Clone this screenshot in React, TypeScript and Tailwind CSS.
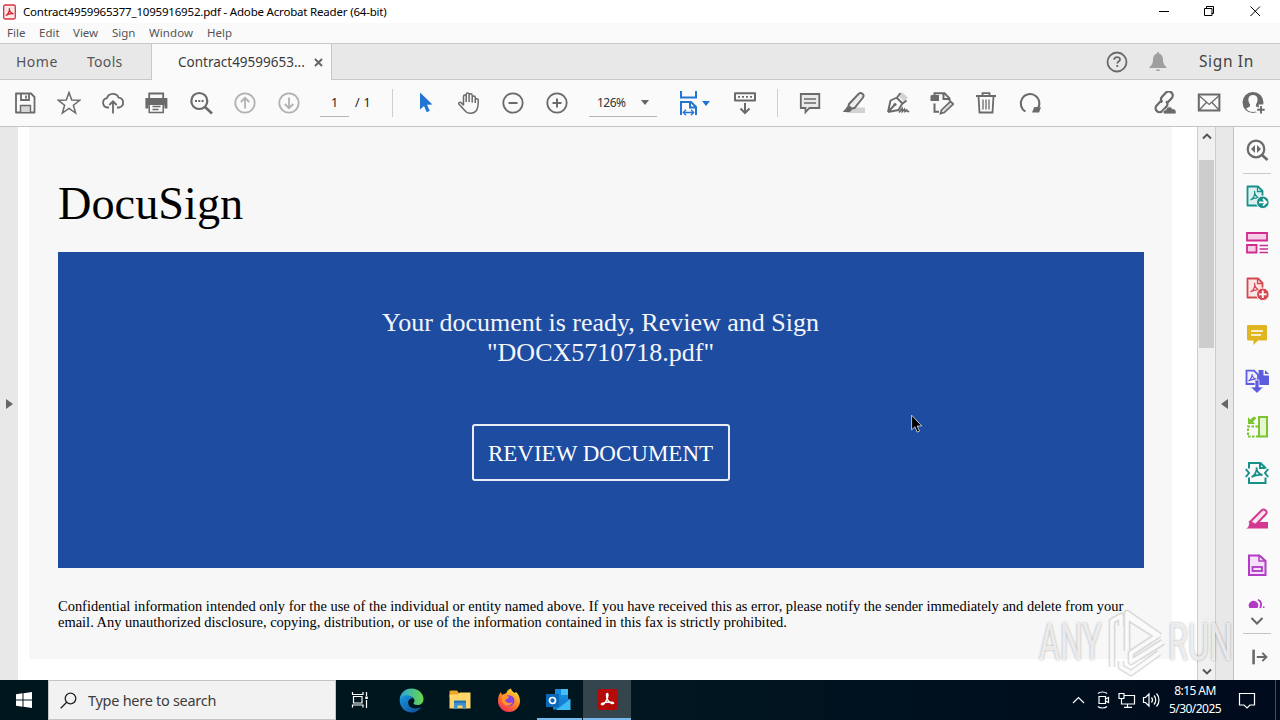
import React from "react";

type IconProps = { children: React.ReactNode; className?: string; size?: number };

function Icon({ children, className = "text-[#6a6a6a]", size = 24 }: IconProps) {
  return (
    <svg
      className={`shrink-0 ${className}`}
      width={size}
      height={size}
      viewBox="0 0 24 24"
      fill="none"
      stroke="currentColor"
      strokeWidth={1.8}
    >
      {children}
    </svg>
  );
}

function Cell({ children }: { children: React.ReactNode }) {
  return <div className="flex w-11 shrink-0 items-center justify-center">{children}</div>;
}

function TitleBar() {
  return (
    <div className="flex h-[23px] shrink-0 items-center bg-white pl-[3px]">
      <svg width="13" height="16" viewBox="0 0 13 16">
        <rect x="0.7" y="1" width="11.6" height="14" rx="1.5" fill="#fbe9e9" stroke="#d3343f" strokeWidth="1.3" />
        <path d="M2.800 11.500c2-.8 4.300-4.500 3.500-7.300 0 2.500 1.700 5 4.200 5.600-2.500-.6-5.500.2-7.700 1.700z" fill="none" stroke="#d3232f" strokeWidth="1.200" />
      </svg>
      <span className="ml-[7px] whitespace-nowrap text-[11.500px] tracking-[-0.190px] text-black">
        Contract4959965377_1095916952.pdf - Adobe Acrobat Reader (64-bit)
      </span>
      <svg className="ml-auto" width="140" height="22" viewBox="1140 0 140 22" fill="none" stroke="#000" strokeWidth="1">
        <path d="M1159 10.500h10M1206.500 8v-2.500h7v7h-2M1204.500 7.500h7.500v7h-7.500zM1250.500 5.500l9.500 9.500M1260 5.500l-9.500 9.500" />
      </svg>
    </div>
  );
}

function MenuBar() {
  return (
    <div className="flex h-5 shrink-0 items-center bg-[#fafafa] pl-[7px] text-[11.500px] text-[#555]">
      <span className="w-8">File</span>
      <span className="w-[34px]">Edit</span>
      <span className="w-[39px]">View</span>
      <span className="w-[37px]">Sign</span>
      <span className="w-[58px] tracking-[0.100px]">Window</span>
      <span>Help</span>
    </div>
  );
}

function TabBar() {
  return (
    <div className="flex h-[37px] shrink-0 border-y border-[#c8c8c8] bg-[#e8e8e8] text-[14px] text-[#555]">
      <div className="flex w-[72px] items-center pl-4 tracking-[0.500px]">Home</div>
      <div className="flex w-[79px] items-center pl-[15px] tracking-[0.300px]">Tools</div>
      <div className="-mb-px flex w-[181px] items-center border-x border-[#c8c8c8] bg-[#fafafa] pl-[26px] text-[13.500px] text-[#3c3c3c]">
        <span className="w-[136px]">Contract49599653...</span>
        <svg width="9" height="9" viewBox="0 0 9 9" stroke="#666" strokeWidth="2">
          <path d="M1 1l7 7M8 1L1 8" />
        </svg>
      </div>
      <div className="ml-auto flex items-center pr-[26px]">
        <Icon className="text-[#6a6a6a]">
          <circle cx="12" cy="12" r="9.500" />
          <path d="M9.200 9.800c0-3.600 5.800-3.300 5.800-.3 0 2-2.700 2-2.700 4M12.300 15v2" />
        </Icon>
        <Icon className="ml-[17px] text-[#9f9f9f]">
          <path d="M12 2c.9 0 1 .8 1 1.500 2.600.8 3.800 2.800 4 6 .2 4 1 5.500 3.500 7.500v1h-17v-1c2.500-2 3.300-3.500 3.500-7.500.2-3.200 1.400-5.200 4-6 0-.7.100-1.500 1-1.500zM9.800 19.500h4.400c-.4 2-4 2-4.400 0z" fill="currentColor" stroke="none" />
        </Icon>
        <span className="ml-[29px] text-[15.500px] tracking-[0.650px] text-[#444]">Sign In</span>
      </div>
    </div>
  );
}

function Toolbar() {
  return (
    <div className="flex h-[47px] shrink-0 items-center border-b border-[#c4c4c4] bg-[#fafafa] pl-[3px]">
      <Cell>
        <Icon>
          <path d="M3 2.500h15l3.500 3.500v15.500H3z" strokeLinejoin="round" />
          <path d="M8 3v6h8V3" />
          <path d="M13 4.500v3" />
          <path d="M7.500 21v-6.500h10V21" fill="#d5d5d5" strokeWidth="1.400" />
        </Icon>
      </Cell>
      <Cell>
        <Icon>
          <path d="M12 1.500l2.700 7.600 8 .2-6.300 4.900 2.200 7.800-6.600-4.600L5.400 22l2.200-7.800-6.300-4.900 8-.2z" strokeWidth="1.500" />
        </Icon>
      </Cell>
      <Cell>
        <Icon>
          <path d="M8 16.500H6.500a4.700 4.700 0 01-.6-9.300 6.300 6.300 0 0111.700-.6A5 5 0 0118 16.500h-2" />
          <path d="M12 22.500V10.500M8.300 14L12 10.300 15.700 14" />
        </Icon>
      </Cell>
      <Cell>
        <Icon>
          <path d="M4.200 7V2.500h14V7" />
          <path d="M.4 7h22v10.500h-3V14h-16v3.500h-3z" fill="currentColor" stroke="none" />
          <path d="M4.200 13.500v8h14v-8M7.500 15.500h8M7.500 18.500h6" strokeWidth="1.500" />
        </Icon>
      </Cell>
      <Cell>
        <Icon>
          <circle cx="10.300" cy="10" r="8" strokeWidth="2.200" />
          <path d="M16 16l7 6.500" strokeWidth="2.600" />
          <path d="M6 10h2M9.300 10h2M12.600 10h2" strokeWidth="2" />
        </Icon>
      </Cell>
      <Cell>
        <Icon className="text-[#b1b1b1]">
          <circle cx="12" cy="12" r="9.700" />
          <path d="M12 17.500V7M7.800 11L12 6.800 16.200 11" />
        </Icon>
      </Cell>
      <Cell>
        <Icon className="text-[#b1b1b1]">
          <circle cx="12" cy="12" r="9.700" />
          <path d="M12 6.500V17M7.800 13l4.200 4.200 4.200-4.200" />
        </Icon>
      </Cell>
      <div className="ml-[9px] h-[28px] w-[29px] border-b border-[#b5b5b5] pt-[6px] text-center text-[12.500px] leading-4 text-[#222]">1</div>
      <span className="ml-[6px] w-[17px] whitespace-nowrap text-[12.500px] tracking-[0.300px] text-[#222]">/ 1</span>
      <div className="ml-[20px] h-7 w-px bg-[#cfcfcf]" />
      <div className="ml-[10px] flex">
        <Cell>
          <Icon className="text-[#2275d0]">
            <path d="M7 1.500l12.500 12-5.500.300 2.700 6-3 1.400-2.700-6.200-4 3.500z" fill="currentColor" stroke="none" />
          </Icon>
        </Cell>
        <Cell>
          <Icon>
            <path d="M6.500 14.500V5.300c0-1.900 2.700-1.900 2.700 0V11M9.200 6V3.500c0-2 2.900-2 2.900 0V11M12.100 4.500c0-2.300 3.100-2.300 3.100 0V11.500M15.200 6.500c0-2 3.100-2 3.100 0V12M18.300 9c.3-1.900 3.200-1.500 3 .4 0 5.600-.3 8-2.300 10.600-2 2.600-7.500 3-10 .8C6 18 4.500 15.500 2 13.300 1 12 2.800 10.700 4.200 11.700l2.300 2.600" strokeWidth="1.500" strokeLinejoin="round" />
          </Icon>
        </Cell>
        <Cell>
          <Icon>
            <circle cx="12" cy="12" r="9.700" />
            <path d="M7.500 12h9" strokeWidth="2" />
          </Icon>
        </Cell>
        <Cell>
          <Icon>
            <circle cx="12" cy="12" r="9.700" />
            <path d="M7.500 12h9M12 7.500v9" strokeWidth="2" />
          </Icon>
        </Cell>
      </div>
      <div className="ml-[10px] flex h-[27px] w-[68px] items-center border-b border-[#b5b5b5] pl-2">
        <span className="w-[44px] text-[12px] tracking-[-0.500px] text-[#333]">126%</span>
        <svg width="8" height="5" viewBox="0 0 8 5"><path d="M0 0h8L4 5z" fill="#666" /></svg>
      </div>
      <div className="ml-[19px] flex w-[37px] items-center">
        <svg width="26" height="26" viewBox="0 0 26 26" fill="none" stroke="#2275d0" strokeWidth="2">
          <path d="M5 1v6.500h15V1" />
          <path d="M5 25V12h10l5 5v8M14 12v5.500h6" />
          <path d="M8 22.500h9M10 19.800l-2.700 2.700 2.700 2.700M15 19.800l2.700 2.700-2.700 2.700" strokeWidth="1.300" />
        </svg>
        <svg width="8" height="5" viewBox="0 0 8 5"><path d="M0 0h8L4 5z" fill="#2275d0" /></svg>
      </div>
      <div className="ml-[20px]">
        <Icon>
          <path d="M2 2.200h20v7.300H2z" strokeWidth="2" strokeLinejoin="round" />
          <path d="M5 5.800h14" strokeDasharray="2 2" strokeWidth="1.800" />
          <path d="M12 12v10M7.500 17.500L12 22l4.500-4.500" strokeWidth="2" />
        </Icon>
      </div>
      <div className="ml-[20px] h-7 w-px bg-[#cfcfcf]" />
      <div className="ml-[10px] flex">
        <Cell>
          <Icon>
            <path d="M2.800 3h18.500v14H11.500l-4 4.300V17H2.800z" fill="#e9e9e9" />
            <path d="M6 8h12M6 12h12" strokeWidth="1.500" />
          </Icon>
        </Cell>
        <Cell>
          <Icon>
            <path d="M8 16.500h15V22H4z" fill="#d2d2d2" stroke="none" />
            <path d="M7 13L16.500 3c2.500-2.300 6.500.3 4.500 3.500L12.500 17l-3 .5L6.500 15z" fill="#ececec" strokeWidth="1.900" />
            <path d="M6 14.500l4.500 3.500L8 21H.8l2.500-3z" fill="currentColor" stroke="none" />
          </Icon>
        </Cell>
        <Cell>
          <Icon>
            <path d="M12.500 5L16 1.200l6 5.300-4 4z" fill="#d2d2d2" stroke="none" />
            <path d="M2 21l2.500-11.500L11 6.500l3.500-4.500M2 21l10.500-2 3.500-6 4.500-3.500M10.500 6.500l6.500 6.500M2 21l6.500-7" strokeWidth="1.900" strokeLinejoin="round" />
            <circle cx="9" cy="13.500" r="1.600" fill="currentColor" stroke="none" />
            <path d="M13 21.500l3-4 .3 3 2.200-2.300.5 2.300 1.700-1.500.8 1.500h1.800" strokeWidth="1.700" />
          </Icon>
        </Cell>
        <Cell>
          <Icon>
            <path d="M.5 5.500c0-1 .5-1.500 1.500-1.500h7v6H.5z" fill="currentColor" stroke="none" />
            <path d="M4.500 4V2.300h10l5 5V10M13.500 3v5h5M4.500 12.500v8.300H9" strokeWidth="2" />
            <path d="M11.500 19l9-8.500 2.800 2.500-9 8.500-3.800 1z" strokeWidth="1.700" fill="#ddd" />
          </Icon>
        </Cell>
        <Cell>
          <Icon>
            <path d="M2 5h20M8.500 5V2.200h7V5M4.500 5l1 16.500h13l1-16.500" />
            <path d="M9 8.500v10M12 8.500v10M15 8.500v10" strokeWidth="1.300" />
          </Icon>
        </Cell>
        <Cell>
          <Icon>
            <path d="M7.500 20.500A9.300 9.300 0 1119.500 18" strokeWidth="2" />
            <path d="M14 21.500l2.300-5.500 7 .5-1 1.500-1.200 3.500z" fill="currentColor" stroke="none" />
          </Icon>
        </Cell>
      </div>
      <div className="ml-auto flex pr-[4px]">
        <div className="flex w-[45px] justify-center">
          <Icon className="mr-[3px] text-[#6a6a6a]">
            <g transform="rotate(-47 12 11)" strokeWidth="2.300">
              <path d="M12 8H4.500a4 4 0 000 8H10a4 4 0 004-4" />
              <path d="M13 14h7a4 4 0 000-8h-5.500a4 4 0 00-4 4" />
            </g>
            <path d="M12.500 23c-2.500-1-1.500-4.500 1.500-4.200.5-3.500 5-4 6.300-1 3.500-.5 5 3.700 3 5.200z" fill="currentColor" stroke="#fafafa" strokeWidth="0.800" />
          </Icon>
        </div>
        <div className="flex w-[44px] justify-center">
          <Icon className="mr-[2px] text-[#6a6a6a]">
            <path d="M1.800 3.500h20.600v16H1.800z" strokeWidth="2" />
            <path d="M2 4.500l10.200 9L22.300 4.500M2.300 19l7-7.500M22 19l-7-7.500" strokeWidth="1.300" />
          </Icon>
        </div>
        <div className="flex w-[44px] justify-center">
          <Icon className="mr-[2px] text-[#6a6a6a]">
            <circle cx="12" cy="11.500" r="10.500" fill="currentColor" stroke="none" />
            <path d="M12 4c5.500 0 5.500 6 3 9.500-.5 2 .5 2.500 4 4L16.500 20c-3 1.300-6 1.300-9 0L5 17.500c3.500-1.500 4.500-2 4-4C6.500 10 6.500 4 12 4z" fill="#fafafa" stroke="none" />
            <path d="M20 13.500v10M15 18.700h9" stroke="#fafafa" strokeWidth="4.500" />
            <path d="M20 15v7.500M16.200 18.700h7.500" strokeWidth="1.900" />
          </Icon>
        </div>
      </div>
    </div>
  );
}

function PdfPage() {
  return (
    <div className="min-w-0 flex-1 bg-white pl-[11px] font-['Liberation_Serif',serif]">
      <div className="h-[532px] w-[1143px] bg-[#f7f7f7] px-[29px] pt-[50px] text-black">
        <h1 className="h-[75px] whitespace-nowrap text-[46.300px] leading-[53px]">DocuSign</h1>
        <section className="flex h-[316px] w-[1086px] flex-col items-center bg-[#1e4ca1] pt-[56px] text-white">
          <p className="-ml-px whitespace-nowrap text-center text-[26px] leading-[30px] text-[#f3f5fa]">
            Your document is ready, Review and Sign
            <br />
            &quot;DOCX5710718.pdf&quot;
          </p>
          <div className="mt-[56px] flex h-[57px] w-[258px] items-center justify-center whitespace-nowrap rounded-[3px] border-2 border-[#e9edf5] pr-px pt-[3px] text-[23px]">
            REVIEW DOCUMENT
          </div>
        </section>
        <p className="mt-[30px] whitespace-nowrap text-[14.480px] leading-4">
          Confidential information intended only for the use of the individual or entity named above. If you have received this as error, please notify the sender immediately and delete from your
          <br />
          email. Any unauthorized disclosure, copying, distribution, or use of the information contained in this fax is strictly prohibited.
        </p>
      </div>
    </div>
  );
}

function Scrollbar() {
  return (
    <div className="flex w-[19px] shrink-0 flex-col items-center border-x border-[#cdcdcd] bg-[#f0f0f0]">
      <div className="flex h-[33px] items-start pt-[6px]">
        <svg width="10" height="7" viewBox="0 0 10 7" fill="none" stroke="#505050" strokeWidth="1.800"><path d="M1 5.500l4-4 4 4" /></svg>
      </div>
      <div className="h-[188px] w-[15px] bg-[#cdcdcd]" />
      <svg className="mb-[5px] mt-auto" width="10" height="7" viewBox="0 0 10 7" fill="none" stroke="#505050" strokeWidth="1.800"><path d="M1 1.500l4 4 4-4" /></svg>
    </div>
  );
}

const acrobat = "M5.500 15c2.500-1 5-5.500 4-9 0 3.500 2 6 5 7-3.500-.7-6 0-9 2z";

function SidePanel() {
  return (
    <div className="flex w-[47px] shrink-0 flex-col items-center border-l border-[#c4c4c4] bg-[#fafafa]">
      <div className="flex h-[47px] w-7 items-center justify-center border-b border-[#c9c9c9]">
        <Icon>
          <circle cx="11" cy="11" r="8.300" strokeWidth="2.200" />
          <path d="M17 17l5.500 5" strokeWidth="2.600" />
          <path d="M10 7v8l-4-4zM12 7v8l4-4z" fill="currentColor" stroke="none" />
        </Icon>
      </div>
      <div className="flex h-[46px] items-center">
        <Icon className="text-[#179089]">
          <path d="M2.500 1.500h10.500l4.500 4.500v14.500h-15z" fill="#dff1ef" strokeLinejoin="round" />
          <path d="M12.500 1.500v5h5" strokeWidth="1.300" />
          <path d={acrobat} strokeWidth="1.200" />
          <circle cx="17.800" cy="17.300" r="6.300" fill="currentColor" stroke="#fafafa" strokeWidth="1" />
          <path d="M14 17.300h7M18 14l3.300 3.300-3.300 3.300" stroke="#fff" strokeWidth="1.800" />
        </Icon>
      </div>
      <div className="flex h-[46px] items-center">
        <Icon className="text-[#cf2c92]">
          <path d="M2 2h20v7.500H2zM2 14h9.500v7.500H2z" fill="#f7cee6" />
          <path d="M14.500 14.500H23M14.500 18H23M14.500 21.500H23" strokeWidth="1.300" />
        </Icon>
      </div>
      <div className="flex h-[46px] items-center">
        <Icon className="text-[#d7474f]">
          <path d="M2.500 1.500h10.500l4.500 4.500v14.500h-15z" fill="#fbe6e6" strokeLinejoin="round" />
          <path d="M12.500 1.500v5h5" strokeWidth="1.300" />
          <path d={acrobat} strokeWidth="1.200" />
          <circle cx="17.800" cy="17.300" r="6.300" fill="currentColor" stroke="#fafafa" strokeWidth="1" />
          <path d="M14 17.300h7.600M17.800 13.500v7.600" stroke="#fff" strokeWidth="1.800" />
        </Icon>
      </div>
      <div className="flex h-[46px] items-center">
        <Icon className="text-[#dfb520]">
          <path d="M3.500 2h17c1 0 1.500.5 1.500 1.500V16c0 1-.5 1.500-1.500 1.500H13L8.500 22v-4.500h-5C2.500 17.500 2 17 2 16V3.500C2 2.500 2.500 2 3.500 2z" fill="currentColor" stroke="none" />
          <path d="M6 8h12M6 12h10" stroke="#fff" strokeWidth="1.700" />
        </Icon>
      </div>
      <div className="flex h-[46px] items-center">
        <Icon className="text-[#5c5ce0]">
          <path d="M13.500 1h5v5.500H24V16h-10z" fill="currentColor" stroke="none" />
          <path d="M20 1l4 4h-4z" fill="currentColor" stroke="none" />
          <path d="M1.500 1.700h7.500l4 4V15h-11.500z" fill="#eeeefe" />
          <path d="M3.500 12c2-1 4-4.500 3.500-7 0 2.500 2 4.800 4.300 5.200-3-.2-5.600.3-7.800 1.800z" strokeWidth="1.200" />
          <path d="M10 11h4v7h4.500L12 24.300l-6.500-6.300H10z" fill="currentColor" stroke="#fafafa" strokeWidth="0.700" />
        </Icon>
      </div>
      <div className="flex h-[46px] items-center">
        <Icon className="text-[#7bc42f]">
          <path d="M14 2h8v19.500h-8z" fill="#e4f6d2" strokeWidth="2" />
          <path d="M13 11.500H3v10h10" strokeDasharray="2.500 1.500" strokeWidth="2" />
          <path d="M3 2v7h7l-2-2.300L11.500 3 9 1.500 5.200 4.500z" fill="currentColor" stroke="none" />
        </Icon>
      </div>
      <div className="flex h-[46px] items-center">
        <Icon className="text-[#179089]">
          <path d="M4 7.500V2h11.500l5 5v.5M4 16.500V22h16.500v-5.500M15 2.500V7h5" strokeWidth="2" />
          <path d="M.8 8L4 12 .8 16M23.200 8L20 12l3.200 4" strokeWidth="2" />
          <path d="M6.500 16c2.500-1 6-5.500 5-9.500 0 3.500 2.500 7 6 7.500-3.500-.5-7 0-11 2z" />
        </Icon>
      </div>
      <div className="flex h-[46px] items-center">
        <Icon className="text-[#d3398f]">
          <path d="M12 15h11v6.500H1z" fill="currentColor" stroke="none" />
          <path d="M5 15L16.500 3.500c2.500-2.300 6.500.5 4.500 3.500L10.500 18z" fill="#fbe3f1" strokeWidth="2" />
          <path d="M5 14l6 4.500-8 2.500z" fill="currentColor" stroke="none" />
        </Icon>
      </div>
      <div className="flex h-[46px] items-center">
        <Icon className="text-[#b23ac4]">
          <path d="M4 2.500h10.500l6 5.500v14H4z" fill="#f5e0fa" strokeWidth="2" />
          <path d="M14 2.500V8h6" strokeWidth="1.500" />
          <rect x="7.500" y="14" width="9.500" height="4" />
        </Icon>
      </div>
      <div className="mt-[11px] flex h-[10px] items-start">
        <svg width="20" height="10" viewBox="0 0 20 10">
          <path d="M2.500 9a4.700 4.700 0 118 0z" fill="#b23ac4" />
          <path d="M11 .8c3.300 1 4 5.500 2 8.200" fill="none" stroke="#b23ac4" strokeWidth="1.800" />
          <path d="M16 7.500h1.500V9h-1.500z" fill="#b23ac4" />
        </svg>
      </div>
      <div className="flex h-[25px] w-7 items-center justify-center border-b border-[#c4c4c4]">
        <svg width="14" height="10" viewBox="0 0 14 10" fill="none" stroke="#666" strokeWidth="2"><path d="M1.500 2L7 7.500 12.500 2" /></svg>
      </div>
      <div className="ml-[5px] flex h-[46px] items-center">
        <Icon size={22}>
          <path d="M5 4v16" strokeWidth="2.800" />
          <path d="M8.500 12h10M14.500 7.500l4.500 4.500-4.500 4.500" strokeWidth="2.200" />
        </Icon>
      </div>
    </div>
  );
}

function Watermark() {
  return (
    <div className="pointer-events-none absolute left-[1039px] top-[605px] h-[72px] w-[198px] font-[Roboto,sans-serif] text-white/75 [text-shadow:0_0_3px_rgba(0,0,0,0.35)]">
      <span className="absolute left-0 top-[12px] origin-left scale-x-[0.630] text-[51px] leading-[52px]">ANY</span>
      <svg className="absolute left-[68px] top-0" width="60" height="72" viewBox="0 0 60 72" fill="none">
        <g stroke="#999" strokeOpacity="0.300" strokeWidth="7" strokeLinejoin="round">
          <path d="M5 62V16l9-5v10M20 46V8l33 23M56 37L24 57V48l26-17-30-19M14 56v6l10 6 28-20" />
        </g>
        <g stroke="#fff" strokeOpacity="0.850" strokeWidth="3.500" strokeLinejoin="round">
          <path d="M5 62V16l9-5v10M20 46V8l33 23M56 37L24 57V48l26-17-30-19M14 56v6l10 6 28-20" />
        </g>
      </svg>
      <span className="absolute left-[129px] top-[12px] origin-left scale-x-[0.640] text-[51px] leading-[52px]">RUN</span>
    </div>
  );
}

function Taskbar() {
  return (
    <div className="flex h-10 shrink-0 bg-gradient-to-r from-[#00161d] via-[#001620] to-[#000b1d]">
      <div className="flex w-12 items-center justify-center">
        <svg width="16" height="16" viewBox="0 0 16 16" fill="#fff"><path d="M0 2.200l6.500-.9v6.200H0zM7.500 1.200L16 0v7.500H7.500zM0 8.500h6.500v6.200L0 13.800zM7.500 8.500H16V16l-8.500-1.200z" /></svg>
      </div>
      <div className="flex w-[288px] items-center border border-[#c5c5c5] bg-[#f2f2f2] pl-[11px]">
        <svg width="17" height="17" viewBox="0 0 17 17" fill="none" stroke="#222" strokeWidth="1.300"><circle cx="10.500" cy="6.500" r="5.300" /><path d="M6.700 10.300L.7 16.300" /></svg>
        <span className="ml-[11px] pt-px text-[14.500px] tracking-[-0.280px] text-[#3c3c3c]">Type here to search</span>
      </div>
      <div className="flex w-12 items-center justify-center">
        <svg width="18" height="18" viewBox="0 0 18 18" fill="none" stroke="#fff" strokeWidth="1.200"><path d="M1.500 1v2.500h10.500V1M2.500 5.500h8.500v6.500H2.500zM1.500 16.500V14h10.500v2.500M15.500 1v4M15.500 9v8" /><path d="M14.300 5.500h2.500v2.500h-2.500z" fill="#fff" stroke="none" /></svg>
      </div>
      <div className="flex w-[54px] items-center justify-center">
        <svg width="25" height="25" viewBox="0 0 25 25">
          <defs>
            <linearGradient id="edgeTop" x1="0" x2="1"><stop offset="0" stopColor="#2ba6df" /><stop offset="1" stopColor="#6ad846" /></linearGradient>
            <linearGradient id="edgeLow" x1="0" x2="1" y1="0" y2="1"><stop offset="0" stopColor="#1797df" /><stop offset="1" stopColor="#114b94" /></linearGradient>
          </defs>
          <path d="M.7 12C1 5 6 .5 12.500.5 20 .5 24.500 6 24.500 11c0 4-3 6-6 6-2.500 0-4.500-1-4-2 2-1.500 1-5.500-3-6.500C7 7.500 2.500 9 .7 12z" fill="url(#edgeTop)" />
          <path d="M.7 12c1.500-3.500 5.500-5.500 9-4.500 2 .5 3.500 1.500 4 3-3-.5-5 2-4.500 5 .7 4.500 6 6.500 13 3.500-2 3.500-5.500 5.500-9.500 5.500C6 24.500.5 19 .7 12z" fill="url(#edgeLow)" />
        </svg>
      </div>
      <div className="flex w-[43px] items-center justify-center">
        <svg width="22" height="20" viewBox="0 0 22 20"><path d="M.5 2C.5 1 1 .5 2 .5h6L10 3h11v4H.5z" fill="#e9a62a" /><path d="M.5 4.500H9l2-2h10.500v16H.5z" fill="#ffd667" /><path d="M5 19v-7h12v7h-3.500v-3.500h-5V19z" fill="#3c91d5" /><path d="M5 10.500h12V13H5z" fill="#2477ba" /></svg>
      </div>
      <div className="flex w-[56px] items-center justify-center">
        <svg width="24" height="24" viewBox="0 0 24 24">
          <defs><linearGradient id="foxFire" x1="0.800" x2="0.200" y1="0" y2="1"><stop offset="0" stopColor="#ffe53b" /><stop offset="0.450" stopColor="#ff8a25" /><stop offset="1" stopColor="#f52658" /></linearGradient></defs>
          <path d="M1 13c0-4 1-7 3-9l1 3c1-1 3-1.500 4-1.500C10 3 12 1 14 .5c0 2 2 3 3.500 4.500l1.500-1c2.500 2 4 5.500 4 9a11 11 0 01-22 0z" fill="url(#foxFire)" />
          <circle cx="12" cy="12.700" r="5.500" fill="#8a43e0" />
          <path d="M5 8c3-1.500 5-.5 7 1-1 2-3 2-4 3 1 3 5 4 7.500 2-1 4-7 5-9.500 1C4.500 12.500 4.500 10 5 8z" fill="#ff9727" />
        </svg>
      </div>
      <div className="mr-px flex w-[45px] items-center justify-center border-b-2 border-[#76b9ed] pr-[2px]">
        <svg width="25" height="23" viewBox="0 0 25 23"><path d="M9 1h13v13H9z" fill="#1789dc" /><path d="M15 1h7v6h-7z" fill="#44bdf7" /><path d="M7 10l17 1v10.500H7z" fill="#1681d1" /><path d="M24.500 11v11H10z" fill="#3ebbf3" /><path d="M0 6h13v13H0z" fill="#0868ba" /><circle cx="6.500" cy="12.500" r="3" fill="none" stroke="#fff" strokeWidth="1.700" /></svg>
      </div>
      <div className="flex w-12 items-center justify-center border-b-2 border-[#76b9ed] bg-[#34454d]">
        <svg width="21" height="21" viewBox="0 0 21 21"><rect width="21" height="21" rx="3.500" fill="#b40b09" /><path d="M4.500 15.500c-1-1.500 6-2.500 8-2.500 5 0 5 2 2.500 1.500-3-1-6-4.500-5.500-9 .2-1.500 1.500-1.500 1.500.5 0 3.500-4 11-6.500 9.500z" fill="none" stroke="#fff" strokeWidth="1.400" /></svg>
      </div>
      <div className="ml-auto flex items-center text-white">
        <svg width="94" height="20" viewBox="0 0 94 20" fill="none" stroke="#fff" strokeWidth="1.200">
          <path d="M2 13l5.500-5.500L13 13" />
          <path d="M28 6.500h6.500v7H28zM34.500 9l3-1.500v5l-3-1.500M27 3.500c2-2 7-2 9 0M27 16.500c2 2 7 2 9 0" />
          <path d="M53 5.500h10.500v8.500H50.500v-4M56.500 14v3M53 17.300h8M48 3.500h5v5h-5zM50.500 8.500v3" />
          <path d="M72.500 7.500h2l3.500-3.500v12l-3.500-3.500h-2zM80.500 7.500c1.300 1.500 1.300 3.500 0 5M83 5.500c2.300 2.500 2.300 6.500 0 9M85.500 3.500c3.300 3.500 3.300 9.500 0 13" />
        </svg>
        <div className="w-[60px] whitespace-nowrap text-center text-[12px] leading-[18px] tracking-[-0.550px]">
          8:15 AM
          <br />
          5/30/2025
        </div>
        <svg className="ml-[13px]" width="18" height="18" viewBox="0 0 18 18" fill="none" stroke="#fff" strokeWidth="1.200"><path d="M1.500 2.500h15v11.500H12l-3 3-3-3H1.500z" /></svg>
        <div className="ml-[19px] h-10 w-[5px] border-l border-[#3f4b59]" />
      </div>
    </div>
  );
}

export default function App() {
  return (
    <div className="relative flex h-[720px] w-[1280px] flex-col overflow-hidden bg-white font-['Noto_Sans','Open_Sans',sans-serif]">
      <TitleBar />
      <MenuBar />
      <TabBar />
      <Toolbar />
      <main className="flex h-[553px] shrink-0">
        <div className="flex w-[18px] shrink-0 items-center justify-center bg-[#e8e8e8]">
          <svg width="7" height="10" viewBox="0 0 7 10"><path d="M0 0l7 5-7 5z" fill="#666" /></svg>
        </div>
        <PdfPage />
        <Scrollbar />
        <div className="flex w-[17px] shrink-0 items-center justify-center bg-[#e8e8e8]">
          <svg width="7" height="10" viewBox="0 0 7 10"><path d="M7 0L0 5l7 5z" fill="#666" /></svg>
        </div>
        <SidePanel />
      </main>
      <Taskbar />
      <Watermark />
      <svg className="absolute left-[911px] top-[414px]" width="13" height="20" viewBox="0 0 13 20"><path d="M.6 1.200v14.600l3.300-3 2.300 5.300 2.300-1-2.300-5.100h4.600z" fill="#000" stroke="#fff" strokeWidth="0.700" /></svg>
    </div>
  );
}
